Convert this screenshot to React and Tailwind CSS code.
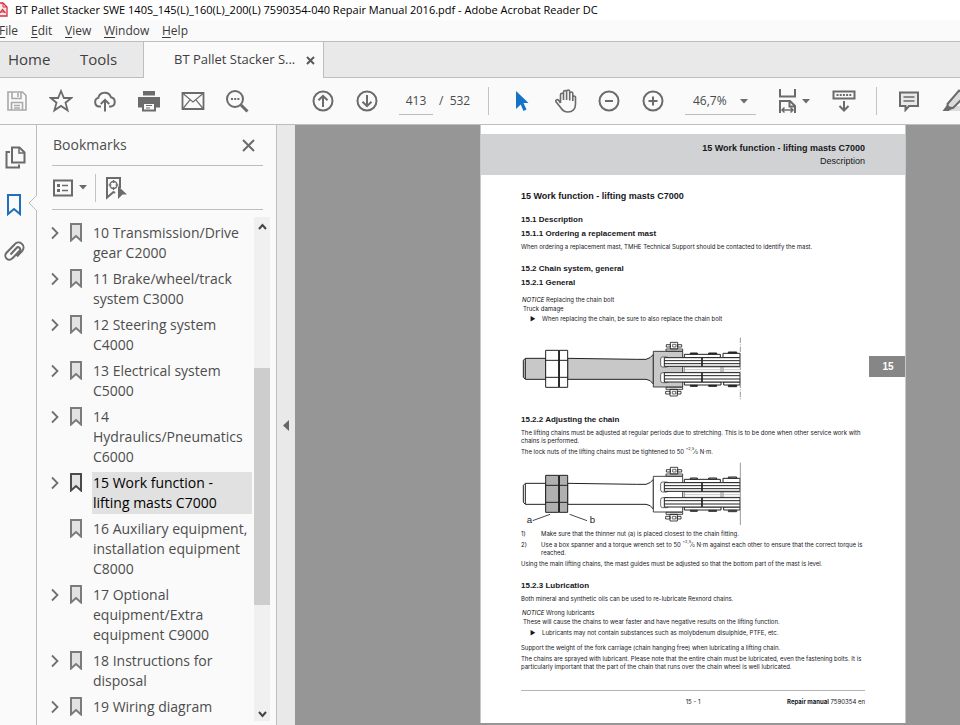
import React from "react";

const ICON = "#6b6b6b";

const BOOKMARKS = [
  { lines: ["10 Transmission/Drive", "gear C2000"], open: true },
  { lines: ["11 Brake/wheel/track", "system C3000"], open: true },
  { lines: ["12 Steering system", "C4000"], open: true },
  { lines: ["13 Electrical system", "C5000"], open: true },
  { lines: ["14", "Hydraulics/Pneumatics", "C6000"], open: true },
  { lines: ["15 Work function -", "lifting masts C7000"], open: true, active: true },
  { lines: ["16 Auxiliary equipment,", "installation equipment", "C8000"], open: false },
  { lines: ["17 Optional", "equipment/Extra", "equipment C9000"], open: true },
  { lines: ["18 Instructions for", "disposal"], open: true },
  { lines: ["19 Wiring diagram"], open: true },
];

const MENUS = [
  ["File", "-ml-px w-8"],
  ["Edit", "w-[34px]"],
  ["View", "w-[39px]"],
  ["Window", "w-[58px]"],
  ["Help", "w-10"],
];

function Icon({ size = 24, children, stroke = ICON, width = 2 }) {
  return (
    <svg width={size} height={size} viewBox={`0 0 ${size} ${size}`} fill="none" stroke={stroke} strokeWidth={width} aria-hidden="true">
      {children}
    </svg>
  );
}

function ToolButton({ label, className = "w-11", children }) {
  return (
    <button type="button" aria-label={label} className={`flex h-11 shrink-0 items-center justify-center ${className}`}>
      {children}
    </button>
  );
}

function Caret() {
  return (
    <svg width="8" height="5" viewBox="0 0 8 5" aria-hidden="true">
      <path d="M0 0H8L4 4.6Z" fill={ICON} />
    </svg>
  );
}

function TitleBar() {
  return (
    <div className="flex h-5 shrink-0 items-center overflow-hidden bg-white">
      <svg width="8" height="18" viewBox="0 0 8 18" fill="none" className="mr-[7px] shrink-0" aria-hidden="true">
        <path d="M0 2H3L7 6V15H0" fill="#fbe9ea" stroke="#d2303d" strokeWidth="1.3" />
        <path d="M3 2V6H7" stroke="#d2303d" />
        <path d="M0 12L2.5 8.5L5.5 12M0 11H5" stroke="#d2303d" strokeWidth="1.2" />
      </svg>
      <h1 className="whitespace-nowrap text-[11px] text-black">
        BT Pallet Stacker SWE 140S_145(L)_160(L)_200(L) 7590354-040 Repair Manual 2016.pdf - Adobe Acrobat Reader DC
      </h1>
    </div>
  );
}

function MenuBar() {
  return (
    <nav className="flex h-[21px] shrink-0 items-center bg-[#fafafa] text-xs text-[#3a3a3a]">
      {MENUS.map(([name, width]) => (
        <button key={name} type="button" className={`text-left ${width}`}>
          <span className="underline underline-offset-2">{name[0]}</span>
          {name.slice(1)}
        </button>
      ))}
    </nav>
  );
}

function TabBar() {
  return (
    <div className="flex h-[37px] shrink-0 border-t border-[#bdbdbd] text-[#3f3f3f]">
      <div className="flex w-36 items-center border-r border-b border-[#bdbdbd] bg-[#e9e9e9] pl-2 text-[15px]">
        <button type="button" className="w-[72px] text-left">Home</button>
        <button type="button">Tools</button>
      </div>
      <div className="flex w-[179px] items-center bg-[#fafafa] pl-[30px] text-[13px]">
        <button type="button" className="w-[132px] text-left whitespace-nowrap">BT Pallet Stacker S...</button>
        <button type="button" aria-label="Close tab">
          <Icon size={9} width={2} stroke="#5a5a5a"><path d="M1 1L8 8M8 1L1 8" /></Icon>
        </button>
      </div>
      <div className="flex-1 border-b border-l border-[#bdbdbd] bg-[#e9e9e9]" />
    </div>
  );
}

function Toolbar() {
  return (
    <div className="flex h-[47px] shrink-0 items-center overflow-hidden border-b border-[#bdbdbd] bg-[#fafafa] text-xs text-[#4a4a4a]">
      <ToolButton label="Save" className="mr-[5px] w-[34px]">
        <Icon size={22} stroke="#a9a9a9" width={1.6}>
          <path d="M2 2H16.5L20 5.5V20H2Z" />
          <path d="M6 2V8.5H15V2M12 3V7" />
          <path d="M5.5 20V12.5H16.5V20M8 15.5H14M8 18H14" />
        </Icon>
      </ToolButton>
      <ToolButton label="Star">
        <Icon>
          <path d="M12 2L14.9 9H22.3L16.5 13.7L18.6 21.3L12 16.9L5.4 21.3L7.5 13.7L1.7 9H9.1Z" strokeWidth="1.8" />
        </Icon>
      </ToolButton>
      <ToolButton label="Upload to cloud">
        <Icon>
          <path d="M8 17.5H6.2A4.4 4.4 0 0 1 5.3 8.9A6.6 6.6 0 0 1 18 8.3A4.7 4.7 0 0 1 18 17.5H16" />
          <path d="M12 22.5V11M7.8 15L12 10.8L16.2 15" />
        </Icon>
      </ToolButton>
      <ToolButton label="Print">
        <Icon>
          <path d="M1 8H23V18.5H18.5V14H5.5V18.5H1Z" fill={ICON} stroke="none" />
          <path d="M6 2H18V6.5H6Z" fill={ICON} stroke="none" />
          <path d="M6 14V21.5H18V14Z" fill="#fafafa" />
          <path d="M9 16.5H15M9 19H13" strokeWidth="1.2" />
        </Icon>
      </ToolButton>
      <ToolButton label="Send by email">
        <Icon width={1.8}>
          <path d="M1.5 4H22.5V20H1.5Z" />
          <path d="M2 4.5L12 13L22 4.5M2 19.5L9 10.8M22 19.5L15 10.8" strokeWidth="1.2" />
        </Icon>
      </ToolButton>
      <ToolButton label="Find" className="mr-[42px] w-11">
        <Icon>
          <circle cx="10" cy="10" r="8" />
          <path d="M16 16L22.5 22.5" strokeWidth="3" />
          <path d="M6 10H8M9.2 10H11.2M12.4 10H14.4" />
        </Icon>
      </ToolButton>
      <ToolButton label="Previous page">
        <Icon>
          <circle cx="12" cy="12" r="9.5" />
          <path d="M12 18V7M7.5 11.2L12 6.8L16.5 11.2" />
        </Icon>
      </ToolButton>
      <ToolButton label="Next page">
        <Icon>
          <circle cx="12" cy="12" r="9.5" />
          <path d="M12 6V17M7.5 12.8L12 17.2L16.5 12.8" />
        </Icon>
      </ToolButton>
      <label className="ml-2.5 flex shrink-0 items-center">
        <input aria-label="Page number" defaultValue="413" className="h-7 w-[34px] border-b border-[#bdbdbd] bg-transparent text-center text-xs outline-none" />
        <span className="ml-1.5 w-[49px] whitespace-pre">/  532</span>
      </label>
      <span className="h-7 w-px shrink-0 bg-[#c4c4c4]" />
      <ToolButton label="Select tool" className="ml-[11px] w-11">
        <svg width="14" height="22" viewBox="0 0 14 22" aria-hidden="true">
          <path d="M1 1L13.5 13H8.5L11.5 19.5L8.5 21L5.7 14.5L1 19Z" fill="#1473c8" />
        </svg>
      </ToolButton>
      <ToolButton label="Hand tool">
        <Icon width={1.6}>
          <path d="M6.5 14V5.8A1.5 1.5 0 0 1 9.5 5.8V11V3A1.5 1.5 0 0 1 12.6 3V11V2.5A1.5 1.5 0 0 1 15.7 2.5V11.5V4.5A1.5 1.5 0 0 1 18.8 4.5V12V8A1.4 1.4 0 0 1 21.5 8V15C21.5 20 18.5 23 14 23C10.5 23 8.5 21.5 7 19L1.8 12.5C1.4 11.2 3 9.8 4.6 11.2L6.5 14" />
        </Icon>
      </ToolButton>
      <ToolButton label="Zoom out">
        <Icon><circle cx="11" cy="12" r="9.5" /><path d="M7 12H15" /></Icon>
      </ToolButton>
      <ToolButton label="Zoom in">
        <Icon><circle cx="11" cy="12" r="9.5" /><path d="M6.5 12H15.5M11 7.5V16.5" /></Icon>
      </ToolButton>
      <div className="relative ml-[9px] shrink-0">
        <select aria-label="Zoom level" className="h-7 w-[71px] appearance-none border-b border-[#bdbdbd] bg-transparent pl-2 text-xs outline-none">
          <option>46,7%</option>
        </select>
        <span className="pointer-events-none absolute top-3 right-2"><Caret /></span>
      </div>
      <button type="button" aria-label="Fit page" className="ml-[22px] flex h-11 shrink-0 items-center gap-1">
        <svg width="20" height="26" viewBox="0 0 20 26" fill="none" stroke={ICON} strokeWidth="2" aria-hidden="true">
          <path d="M2 1V8.5H17V1" />
          <path d="M2 25V13H12L17 18V25M11.5 13V18.5H17" />
          <path d="M4 22H15M6.5 19.5L4 22L6.5 24.5M12.5 19.5L15 22L12.5 24.5" strokeWidth="1.5" />
        </svg>
        <Caret />
      </button>
      <ToolButton label="Reading mode" className="ml-3 w-11">
        <Icon>
          <path d="M1.5 2.5H22.5V9.5H1.5Z" />
          <path d="M4.5 6H19.5" strokeDasharray="2 1.2" />
          <path d="M12 12V21M7.5 17L12 21.5L16.5 17" />
        </Icon>
      </ToolButton>
      <span className="ml-2.5 h-7 w-px shrink-0 bg-[#c4c4c4]" />
      <ToolButton label="Comment" className="ml-2.5 w-11">
        <Icon size={22}>
          <path d="M2 2.5H20V16H11L7.5 20V16H2Z" fill="#e9e9e9" />
          <path d="M5.5 7H16.5M5.5 11H16.5" strokeWidth="1.5" />
        </Icon>
      </ToolButton>
      <ToolButton label="Highlight" className="ml-2.5 w-[26px]">
        <svg width="26" height="24" viewBox="0 0 26 24" fill="none" stroke={ICON} strokeWidth="2" aria-hidden="true">
          <path d="M13 17H26V22H8Z" fill="#dcdcdc" stroke="none" />
          <path d="M6.5 15L18 1.5L25 6L12 19L7 18.5Z" fill="#dcdcdc" />
          <path d="M6 16L12 19.5L7.5 22H1.5Z" fill={ICON} stroke="none" />
        </svg>
      </ToolButton>
    </div>
  );
}

function NavRail() {
  return (
    <aside className="relative flex w-[37px] shrink-0 flex-col items-start border-r border-[#bdbdbd] bg-[#fafafa] pt-5 pl-1">
      <button type="button" aria-label="Page thumbnails" className="mb-6">
        <Icon>
          <path d="M8 2.5H15.5L20.5 7.5V17.5H8Z" />
          <path d="M15 2.5V8H20.5" strokeWidth="1.5" />
          <path d="M6 7H2.5V22.5H15V19.5" />
        </Icon>
      </button>
      <button type="button" aria-label="Bookmarks" className="mb-6">
        <Icon stroke="#1f6fbd"><path d="M4 2H16V21L10 16L4 21Z" /></Icon>
      </button>
      <button type="button" aria-label="Attachments">
        <Icon size={22}>
          <path d="M6.5 13.5L12.5 7A2 2 0 0 1 15.6 9.8L8.5 17.2A4 4 0 0 1 2.3 12L10.5 3.5A5 5 0 0 1 18.5 9.5L13 15.5" />
        </Icon>
      </button>
      <svg width="9" height="16" viewBox="0 0 9 16" className="absolute top-[70px] -right-px" aria-hidden="true">
        <path d="M9 0L1 8L9 16" fill="#fafafa" stroke="#bdbdbd" />
      </svg>
    </aside>
  );
}

function BookmarkGlyph({ active }) {
  return (
    <svg width="14" height="20" viewBox="0 0 14 20" aria-hidden="true">
      <path
        d="M2 2H12V18.5L7 14L2 18.5Z"
        fill="#e2e2e2"
        stroke={active ? "#4a4a4a" : "#7b7b7b"}
        strokeWidth="2"
      />
    </svg>
  );
}

function BookmarksPanel() {
  return (
    <section className="flex w-60 shrink-0 flex-col overflow-hidden border-r border-[#bdbdbd] bg-[#fafafa] text-sm text-[#4d4d4d]">
      <div className="mr-[13px] ml-[15px] flex h-[41px] shrink-0 items-center justify-between border-b border-[#bdbdbd] pr-2 pl-px">
        <h2>Bookmarks</h2>
        <button type="button" aria-label="Close panel">
          <Icon size={13}><path d="M1 1L12 12M12 1L1 12" /></Icon>
        </button>
      </div>
      <div className="mr-[13px] ml-[15px] flex h-[44px] shrink-0 items-center border-b border-[#bdbdbd]">
        <button type="button" aria-label="Options" className="flex items-center gap-1.5">
          <svg width="21" height="18" viewBox="0 0 21 18" fill="none" stroke={ICON} strokeWidth="2" aria-hidden="true">
            <path d="M2 1.5H20V16.5H2Z" />
            <path d="M5 6.5H8M5 11.5H8" strokeWidth="3" />
            <path d="M10 6.5H16M10 11.5H16" strokeWidth="1.6" />
          </svg>
          <Caret />
        </button>
        <span className="ml-2 h-7 w-px bg-[#c4c4c4]" />
        <button type="button" aria-label="Find current bookmark" className="ml-2">
          <Icon>
            <path d="M11 17L9.5 16L3 21.5V2H16V12" />
            <circle cx="9.5" cy="9" r="3.5" strokeWidth="1.4" />
            <path d="M9.5 4V7M9.5 11V14M4.5 9H7.5M11.5 9H14.5" strokeWidth="1.2" />
            <path d="M14 10L23 18.5H18.5L14 23Z" fill={ICON} stroke="none" />
          </Icon>
        </button>
      </div>
      <div className="mt-[7px] flex min-h-0 flex-1">
        <ul className="flex w-[217px] shrink-0 flex-col gap-1 overflow-hidden pt-[5px] pl-3.5">
          {BOOKMARKS.map((item) => (
            <li key={item.lines.join(" ")} className="flex shrink-0 items-start">
              <button type="button" aria-label="Expand" className={`mt-[3px] h-4 w-[18px] ${item.open ? "" : "invisible"}`}>
                <svg width="8" height="14" viewBox="0 0 8 14" fill="none" stroke="#6f6f6f" strokeWidth="1.8" aria-hidden="true">
                  <path d="M1 1.5L6.5 7L1 12.5" />
                </svg>
              </button>
              <BookmarkGlyph active={item.active} />
              <button
                type="button"
                className={`ml-[9px] w-40 py-px pl-px text-left leading-5 whitespace-pre ${item.active ? "bg-[#e1e1e1] text-black" : ""}`}
              >
                {item.lines.join("\n")}
              </button>
            </li>
          ))}
        </ul>
        <div className="mb-1 flex w-4 shrink-0 flex-col items-center bg-[#f0f0f0]">
          <button type="button" aria-label="Scroll up" className="flex h-[18px] items-center">
            <Icon size={9} stroke="#444"><path d="M1 7L4.5 3L8 7" /></Icon>
          </button>
          <span className="flex-[133]" />
          <span className="w-full flex-[236] bg-[#cdcdcd]" />
          <span className="flex-[102]" />
          <button type="button" aria-label="Scroll down" className="flex h-[14px] items-center">
            <Icon size={9} stroke="#444"><path d="M1 2L4.5 6L8 2" /></Icon>
          </button>
        </div>
      </div>
    </section>
  );
}

function ChainBolt({ shaft, nuts, labels }) {
  return (
    <svg width="224" height="66" viewBox="33 0 672 198" fill="#fff" stroke="#222" strokeWidth="3" className="block font-['Liberation_Sans',Arial,sans-serif]" role="img" aria-label="Chain bolt">
      <path d="M46 70H107V133H46L40 127V76Z" fill={shaft} />
      <path d="M46 71V132" />
      <path d="M173 70L380 73H408Q422 70 430 58V147Q422 134 408 133H173Z" fill={shaft} />
      <path d="M430 49H518V156H430Z" fill={shaft} strokeWidth="2.5" />
      <path d="M107 46H146V157H107ZM148 46H173V157H148ZM107 76H173M107 127H173" fill={nuts} />
      <path d="M147.5 46V157" strokeWidth="4" />
      <rect x="452" y="66" width="24" height="30" rx="6" strokeWidth="2" />
      <rect x="452" y="113" width="24" height="30" rx="6" strokeWidth="2" />
      <path d="M523 95V113M633 95V113M639 95V113M523 96H690M523 112H690" strokeWidth="2" stroke="#555" />
      <path d="M523 104H690" strokeWidth="2" stroke="#aaa" />
      <path d="M523 58H631V68H523ZM639 55H690V68H639ZM523 141H633V150H523ZM641 141H690V150H641Z" />
      <path d="M541 54H562V57H541ZM596 54H620V57H596ZM655 51H680V54H655ZM541 151H562V154H541ZM596 151H620V154H596ZM655 151H680V155H655Z" fill={shaft === "#fff" ? "#fff" : "#333"} />
      <path d="M463 68H690V94H463ZM463 77H690M463 86H690" />
      <path d="M463 113H690V141H463ZM463 122H690M463 132H690" />
      <path d="M576 68V94M576 113V141" strokeWidth="5" />
      <path d="M691 8V195" stroke="#999" strokeDasharray={shaft === "#fff" ? undefined : "16 4 3 4"} />
      <path d="M468 42H518V48H468ZM481 22H503V42H481ZM469 29H481V36H469ZM503 29H515V36H503Z" strokeWidth="2.5" />
      <path d="M468 157H518V163H468ZM480 163H502V183H480ZM467 169H480V177H467ZM502 169H513V177H502Z" strokeWidth="2.5" />
      <path d="M488 28H498V36H488ZM487 169H497V177H487Z" strokeWidth="2" />
      {labels && (
        <g>
          <path d="M68 182L120 163M179 163L231 182" strokeWidth="2.5" />
          <text x="50" y="189" fontSize="29" fill="#222" stroke="none">a</text>
          <text x="239" y="189" fontSize="29" fill="#222" stroke="none">b</text>
        </g>
      )}
    </svg>
  );
}

function H({ className = "", children }) {
  return <h4 className={`font-['Liberation_Sans',Arial,sans-serif] text-[8px] leading-3 font-bold ${className}`}>{children}</h4>;
}

function Torque() {
  return (
    <span>
      <span className="relative -top-1 text-[4px] leading-none">+2,5</span>⁄
      <span className="text-[4px] leading-none">0</span>
    </span>
  );
}

function DocumentPage() {
  return (
    <article className="ml-[185px] flex w-[426px] shrink-0 flex-col self-start border-x border-[#c8c8c8] bg-white pt-[9px] pb-[17px] font-[Inter,'Liberation_Sans',sans-serif] text-[6px] leading-2 whitespace-nowrap text-[#16161c]">
      <header className="h-[41px] bg-[#d1d2d3] pt-2 pr-10 text-right font-['Liberation_Sans',Arial,sans-serif]">
        <p className="text-[9px] leading-[13px] font-bold">15 Work function - lifting masts C7000</p>
        <p className="text-[9px] leading-[13px]">Description</p>
      </header>
      <div className="relative px-10 pt-[15px]">
        <h3 className="font-['Liberation_Sans',Arial,sans-serif] text-[9px] leading-3 font-bold">15 Work function - lifting masts C7000</h3>
        <H className="mt-3">15.1 Description</H>
        <H className="mt-0.5">15.1.1 Ordering a replacement mast</H>
        <p className="mt-[3px]">When ordering a replacement mast, TMHE Technical Support should be contacted to identify the mast.</p>
        <H className="mt-3">15.2 Chain system, general</H>
        <H className="mt-0.5">15.2.1 General</H>
        <p className="mt-[7px] pl-px"><i className="text-black">NOTICE</i> Replacing the chain bolt</p>
        <p className="mt-px pl-0.5">Truck damage</p>
        <p className="mt-0.5 flex pl-[9px]"><span className="w-3 shrink-0">►</span>When replacing the chain, be sure to also replace the chain bolt</p>
        <div className="mt-3"><ChainBolt shaft="#c8c8c8" nuts="#fff" /></div>
        <H className="mt-[13px]">15.2.2 Adjusting the chain</H>
        <p className="mt-[3px]">
          The lifting chains must be adjusted at regular periods due to stretching. This is to be done when other service work with<br />
          chains is performed.
        </p>
        <p className="mt-[3px] h-2">The lock nuts of the lifting chains must be tightened to 50 <Torque /> N·m.</p>
        <div className="mt-1"><ChainBolt shaft="#fff" nuts="#b0b0b0" labels /></div>
        <ol className="mt-1">
          <li className="flex"><span className="w-5 shrink-0">1)</span>Make sure that the thinner nut (a) is placed closest to the chain fitting.</li>
          <li className="mt-[3px] flex h-4">
            <span className="w-5 shrink-0">2)</span>
            <p>
              Use a box spanner and a torque wrench set to 50 <Torque /> N·m against each other to ensure that the correct torque is<br />
              reached.
            </p>
          </li>
        </ol>
        <p className="mt-[3px]">Using the main lifting chains, the mast guides must be adjusted so that the bottom part of the mast is level.</p>
        <H className="mt-3">15.2.3 Lubrication</H>
        <p className="mt-[3px]">Both mineral and synthetic oils can be used to re-lubricate Rexnord chains.</p>
        <p className="mt-1.5 pl-px"><i className="text-black">NOTICE</i> Wrong lubricants</p>
        <p className="mt-px pl-0.5">These will cause the chains to wear faster and have negative results on the lifting function.</p>
        <p className="mt-[3px] flex pl-[9px]"><span className="w-3 shrink-0">►</span>Lubricants may not contain substances such as molybdenum disulphide, PTFE, etc.</p>
        <p className="mt-[7px]">Support the weight of the fork carriage (chain hanging free) when lubricating a lifting chain.</p>
        <p className="mt-[3px]">
          The chains are sprayed with lubricant. Please note that the entire chain must be lubricated, even the fastening bolts. It is<br />
          particularly important that the part of the chain that runs over the chain wheel is well lubricated.
        </p>
        <footer className="mt-[19px] grid grid-cols-3 border-t border-[#b5b5b5] pt-[7px]">
          <span />
          <span className="text-center">15 - 1</span>
          <span className="text-right"><b>Repair manual</b> 7590354 en</span>
        </footer>
        <span className="absolute top-[181px] right-0 flex h-[21px] w-9 items-center justify-center bg-[#868686] pl-0.5 font-['Liberation_Sans',Arial,sans-serif] text-[10px] font-bold text-white">15</span>
      </div>
    </article>
  );
}

export default function App() {
  return (
    <div className="flex h-screen flex-col overflow-hidden bg-[#fafafa] font-['Open_Sans','Noto_Sans',sans-serif]">
      <TitleBar />
      <MenuBar />
      <TabBar />
      <Toolbar />
      <div className="flex min-h-0 flex-1">
        <NavRail />
        <BookmarksPanel />
        <button type="button" aria-label="Collapse panel" className="flex w-[18px] shrink-0 items-center justify-center bg-[#e9e9e9]">
          <svg width="6" height="11" viewBox="0 0 6 11" aria-hidden="true"><path d="M6 0V11L0 5.5Z" fill="#666" /></svg>
        </button>
        <main className="flex min-w-0 flex-1 overflow-hidden bg-[#969696]">
          <DocumentPage />
        </main>
      </div>
    </div>
  );
}
